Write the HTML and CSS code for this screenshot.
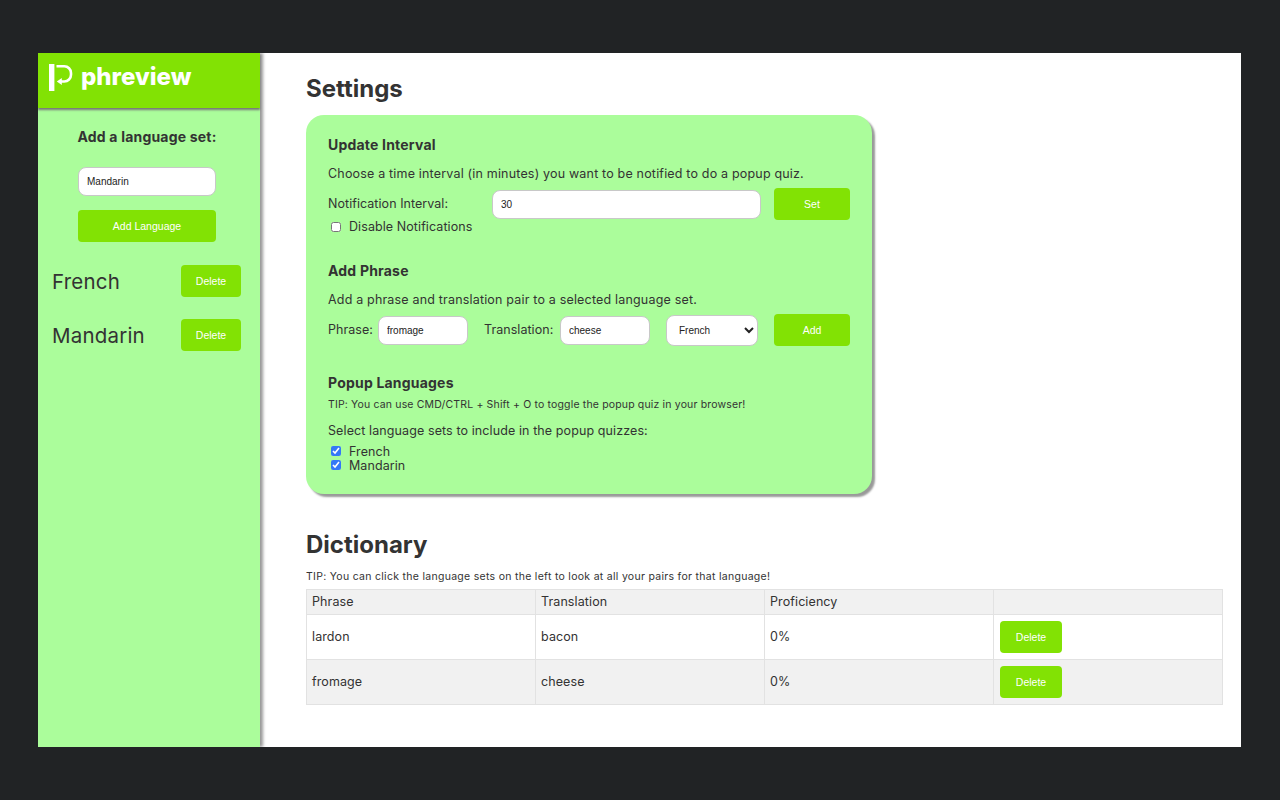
FILE: index.html
```html
<!DOCTYPE html>
<html lang="en">
<head>
<meta charset="utf-8">
<title>phreview</title>
<link rel="stylesheet" href="styles.css">
</head>
<body>
<div class="app">
  <aside class="sidebar">
    <header class="brand">
      <svg class="logo" width="24" height="27" viewBox="0 0 24 27" aria-hidden="true">
        <rect x="0" y="0" width="5.4" height="27" fill="#fff"/>
        <path d="M7.5 2.3h7.8a6.7 6.7 0 0 1 6.7 6.7v1.8a6.7 6.7 0 0 1-6.7 6.7h-5" fill="none" stroke="#fff" stroke-width="2.6"/>
        <path d="M7.8 17.5l5-3.6v7.2z" fill="#fff"/>
      </svg>
      <span class="brand-name">phreview</span>
    </header>
    <div class="add-set">
      <h3 class="add-title">Add a language set:</h3>
      <input class="field side-field" type="text" value="Mandarin">
      <button class="btn side-btn">Add Language</button>
    </div>
    <div class="set-row"><span class="set-name">French</span><button class="btn del">Delete</button></div>
    <div class="set-row"><span class="set-name">Mandarin</span><button class="btn del">Delete</button></div>
  </aside>
  <main class="main">
    <h1 class="settings-title">Settings</h1>
    <section class="panel">
      <h3 class="panel-h">Update Interval</h3>
      <p class="panel-p">Choose a time interval (in minutes) you want to be notified to do a popup quiz.</p>
      <div class="row row-interval">
        <label class="lbl lbl-interval">Notification Interval:</label>
        <input class="field grow" type="text" value="30">
        <button class="btn form-btn">Set</button>
      </div>
      <label class="check check-disable"><input type="checkbox"><span>Disable Notifications</span></label>

      <h3 class="panel-h h-phrase">Add Phrase</h3>
      <p class="panel-p">Add a phrase and translation pair to a selected language set.</p>
      <div class="row row-phrase">
        <label class="lbl lbl-phrase">Phrase:</label>
        <input class="field f-phrase" type="text" value="fromage">
        <label class="lbl lbl-trans">Translation:</label>
        <input class="field f-trans" type="text" value="cheese">
        <select class="field f-select"><option>French</option><option>Mandarin</option></select>
        <button class="btn form-btn">Add</button>
      </div>

      <h3 class="panel-h h-popup">Popup Languages</h3>
      <p class="tip">TIP: You can use CMD/CTRL + Shift + O to toggle the popup quiz in your browser!</p>
      <p class="panel-p p-select">Select language sets to include in the popup quizzes:</p>
      <label class="check"><input type="checkbox" checked><span>French</span></label>
      <label class="check"><input type="checkbox" checked><span>Mandarin</span></label>
    </section>
    <h1 class="dict-title">Dictionary</h1>
    <p class="tip dict-tip">TIP: You can click the language sets on the left to look at all your pairs for that language!</p>
    <table class="dict">
      <thead><tr><th>Phrase</th><th>Translation</th><th>Proficiency</th><th></th></tr></thead>
      <tbody>
        <tr><td>lardon</td><td>bacon</td><td>0%</td><td><button class="btn del">Delete</button></td></tr>
        <tr><td>fromage</td><td>cheese</td><td>0%</td><td><button class="btn del">Delete</button></td></tr>
      </tbody>
    </table>
  </main>
</div>
</body>
</html>
```
FILE: styles.css
```css
* { box-sizing: border-box; }
html, body { height: 100%; }
body {
  margin: 0;
  padding: 53px 39px 53px 38px;
  background: #212325;
  color: #333;
  font-family: Inter, "Liberation Sans", sans-serif;
}
.app { display: flex; height: 694px; background: #fff; overflow: hidden; }
.sidebar {
  width: 222px;
  flex: none;
  background: #abfd9b;
  box-shadow: 3px 0 3px #999;
}
.brand {
  height: 55px;
  background: #82e204;
  box-shadow: 0 2px 2px #777;
  display: flex;
  align-items: flex-start;
  padding: 9px 0 0 11px;
  gap: 8px;
  position: relative;
}
.logo { margin-top: 2px; flex: none; }
.brand-name { color: #fff; font-weight: 800; font-size: 24px; line-height: 30px; }
.add-set { display: flex; flex-direction: column; align-items: center; padding: 19px 4px 0 0; }
.add-title { margin: 0 0 20px; font-size: 14px; line-height: 20px; font-weight: 700; color: #333; white-space: nowrap; letter-spacing: 0.2px; }
.field {
  height: 29px;
  border: 1px solid #c8c8c8;
  border-radius: 8px;
  background: #fff;
  font-family: "Liberation Sans", sans-serif;
  font-size: 10px;
  color: #222;
  padding: 0 8px;
  outline: none;
  min-width: 0;
}
.side-field { width: 138px; }
.btn {
  background: #82e204;
  color: #fff;
  border: 0;
  border-radius: 4px;
  font-family: "Liberation Sans", sans-serif;
  font-size: 10.5px;
  height: 32px;
  padding: 0;
}
.side-btn { width: 138px; margin-top: 14px; margin-bottom: 23px; }
.set-row { display: flex; align-items: center; justify-content: space-between; padding: 0 19px 0 14px; height: 32px; margin-bottom: 22px; }
.set-name { font-size: 20.5px; color: #333; letter-spacing: 0.2px; }
.del { width: 60px; font-size: 10.5px; }
.main { flex: 1; padding: 0 18px 0 46px; min-width: 0; }
.settings-title { margin: 20px 0 10px; font-size: 24px; line-height: 32px; font-weight: 700; color: #333; }
.panel {
  width: 566px;
  height: 379px;
  padding: 20px 22px;
  background: #abfd9b;
  border-radius: 18px;
  box-shadow: 3px 3px 2px #999;
}
.panel-h { margin: 0; font-size: 14px; line-height: 19px; font-weight: 700; color: #333; letter-spacing: 0.2px; }
.panel-p { margin: 11px 0 0; font-size: 12.5px; line-height: 18px; color: #333; letter-spacing: 0.18px; }
.row { display: flex; align-items: center; }
.row-interval { margin-top: 5px; height: 32px; }
.lbl { font-size: 12.5px; color: #333; white-space: nowrap; letter-spacing: 0.05px; padding-bottom: 2px; }
.lbl-interval { width: 164px; flex: none; }
.grow { flex: 1; width: 0; }
.form-btn { width: 76px; flex: none; margin-left: 13px; }
.check { display: flex; align-items: center; height: 14px; font-size: 12.5px; color: #333; letter-spacing: 0.08px; }
.check input { width: 10px; height: 10px; margin: 0 8px 0 3px; accent-color: #3478f6; }
.check-disable { margin-top: -1px; height: 15px; }
.h-phrase { margin-top: 27px; }
.row-phrase { margin-top: 5px; height: 32px; }
.lbl-phrase { width: 50px; flex: none; }
.f-phrase { width: 90px; flex: none; }
.lbl-trans { margin-left: 16px; width: 76px; flex: none; }
.f-trans { width: 90px; flex: none; }
.f-select { width: 92px; flex: none; margin-left: 16px; height: 31px; padding: 0 4px 0 8px; }
.row-phrase .form-btn { margin-left: 16px; }
.h-popup { margin-top: 27px; }
.tip { margin: 5px 0 0; font-size: 10.5px; line-height: 16px; color: #333; letter-spacing: 0.16px; }
.p-select { margin-top: 9px; margin-bottom: 4px; letter-spacing: 0.1px; }
.dict-title { margin: 34px 0 0; font-size: 24px; line-height: 34px; font-weight: 700; color: #333; }
.dict-tip { margin-top: 7px; letter-spacing: 0.29px; }
.dict { width: 917px; margin-top: 4px; border-collapse: collapse; table-layout: fixed; font-size: 12.5px; color: #333; letter-spacing: 0.1px; }
.dict th, .dict td { border: 1px solid #e2e2e2; text-align: left; font-weight: 400; padding: 0 5px 2px; }
.dict td:last-child { padding-bottom: 0; }
.dict th { height: 25px; background: #f1f1f1; }
.dict td { height: 45px; }
.dict tbody tr:nth-child(2) { background: #f1f1f1; }
.dict .del { display: block; width: 62px; margin-left: 1px; }
```
